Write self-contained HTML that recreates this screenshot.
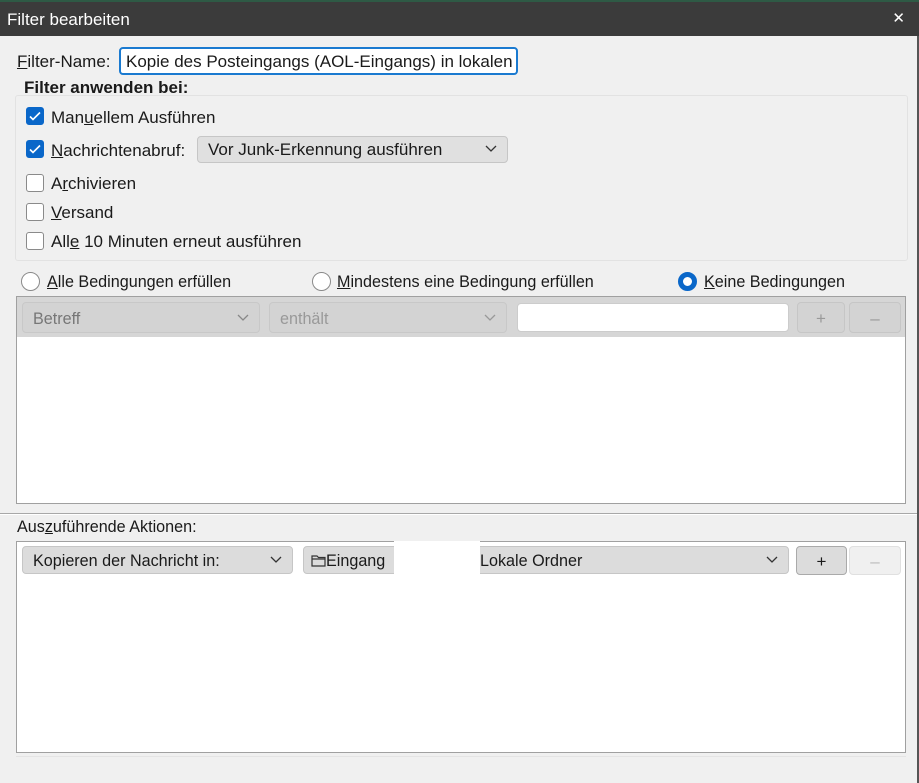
<!DOCTYPE html>
<html><head><meta charset="utf-8">
<style>
*{box-sizing:border-box;margin:0;padding:0}
body{width:919px;height:783px;background:#f0f0f0;font-family:"Liberation Sans",sans-serif;font-size:17px;color:#1a1a1a;position:relative;overflow:hidden}
.a{position:absolute}
.title{left:0;top:0;width:919px;height:36px;background:#3b3b3b;border-top:2px solid #2e5a45;color:#fff;font-size:17px;padding:8px 0 0 7px}
.cb{width:18px;height:18px;border:1px solid #8a8a8a;border-radius:3px;background:#fff}
.cb.on{background:#0a67c9;border-color:#0a67c9}
.lbl{white-space:nowrap}
.dd{background:#e0e0e0;border:1px solid #c6c6c6;border-radius:4px;padding:4px 10px;white-space:nowrap}
.chev{position:absolute;right:10px;top:8px}
.cond{transform-origin:left center}
.rad{width:19px;height:19px;border-radius:50%;border:1px solid #8a8a8a;background:#fff}
</style></head><body>
<div class="a title">Filter bearbeiten<span class="a" style="right:14px;top:7px;font-size:15px">✕</span></div>
<div class="a" style="right:0;top:36px;width:2px;height:747px;background:#555"></div>

<div class="a lbl" style="left:17px;top:52px"><u>F</u>ilter-Name:</div>
<div class="a" style="left:119px;top:47px;width:399px;height:28px;border:2px solid #1a7ad0;border-radius:4px;background:#fff;padding:3px 0 0 5px;white-space:nowrap;overflow:hidden">Kopie des Posteingangs (AOL-Eingangs) in lokalen O</div>
<div class="a lbl" style="left:24px;top:78px;font-weight:bold">Filter anwenden bei:</div>
<div class="a" style="left:15px;top:95px;width:893px;height:166px;border:1px solid #e2e2e2;border-radius:3px"></div>

<div class="a cb on" style="left:26px;top:107px"><svg width="16" height="16" viewBox="0 0 16 16"><path d="M3 8.5l3 3 7-7" stroke="#fff" stroke-width="1.6" fill="none"/></svg></div>
<div class="a lbl" style="left:51px;top:108px">Man<u>u</u>ellem Ausführen</div>
<div class="a cb on" style="left:26px;top:140px"><svg width="16" height="16" viewBox="0 0 16 16"><path d="M3 8.5l3 3 7-7" stroke="#fff" stroke-width="1.6" fill="none"/></svg></div>
<div class="a lbl" style="left:51px;top:141px"><u>N</u>achrichtenabruf:</div>
<div class="a dd" style="left:197px;top:136px;width:311px;height:27px;padding-top:3px">Vor Junk-Erkennung ausführen<svg class="chev" width="12" height="8" viewBox="0 0 12 8"><path d="M1 1l5 5 5-5" stroke="#333" stroke-width="1.3" fill="none"/></svg></div>
<div class="a cb" style="left:26px;top:174px"></div>
<div class="a lbl" style="left:51px;top:174px">A<u>r</u>chivieren</div>
<div class="a cb" style="left:26px;top:203px"></div>
<div class="a lbl" style="left:51px;top:203px"><u>V</u>ersand</div>
<div class="a cb" style="left:26px;top:232px"></div>
<div class="a lbl" style="left:51px;top:232px">All<u>e</u> 10 Minuten erneut ausführen</div>

<div class="a rad" style="left:21px;top:272px"></div>
<div class="a lbl cond" style="left:47px;top:272px;transform:scaleX(.95)"><u>A</u>lle Bedingungen erfüllen</div>
<div class="a rad" style="left:312px;top:272px"></div>
<div class="a lbl cond" style="left:337px;top:272px;transform:scaleX(.95)"><u>M</u>indestens eine Bedingung erfüllen</div>
<div class="a rad" style="left:678px;top:272px;border:5px solid #0a67c9"></div>
<div class="a lbl cond" style="left:704px;top:272px;transform:scaleX(.95)"><u>K</u>eine Bedingungen</div>

<div class="a" style="left:16px;top:296px;width:890px;height:208px;border:1px solid #a0a0a0;background:#fff"></div>
<div class="a" style="left:17px;top:297px;width:888px;height:40px;background:#d6d6d6"></div>
<div class="a dd" style="left:22px;top:302px;width:238px;height:31px;color:#777;background:#d3d3d3;border-color:#c8c8c8;padding-top:6px"><span class="cond" style="display:inline-block;transform:scaleX(.95)">Betreff</span><svg class="chev" style="top:11px" width="12" height="8" viewBox="0 0 12 8"><path d="M1 1l5 5 5-5" stroke="#888" stroke-width="1.3" fill="none"/></svg></div>
<div class="a dd" style="left:269px;top:302px;width:238px;height:31px;color:#999;background:#d3d3d3;border-color:#c8c8c8;padding-top:6px"><span class="cond" style="display:inline-block;transform:scaleX(.95)">enthält</span><svg class="chev" style="top:11px" width="12" height="8" viewBox="0 0 12 8"><path d="M1 1l5 5 5-5" stroke="#999" stroke-width="1.3" fill="none"/></svg></div>
<div class="a" style="left:517px;top:303px;width:272px;height:29px;background:#fff;border:1px solid #ccc;border-radius:4px"></div>
<div class="a dd" style="left:797px;top:302px;width:48px;height:31px;background:#d3d3d3;color:#999;text-align:center;padding:6px 0 0">+</div>
<div class="a dd" style="left:849px;top:302px;width:52px;height:31px;background:#d3d3d3;color:#999;text-align:center;padding:6px 0 0">–</div>

<div class="a" style="left:0;top:513px;width:917px;height:2px;border-top:1px solid #a8a8a8;border-bottom:1px solid #fff"></div>
<div class="a lbl cond" style="left:17px;top:517px;transform:scaleX(.95)">Aus<u>z</u>uführende Aktionen:</div>

<div class="a" style="left:16px;top:541px;width:890px;height:212px;border:1px solid #a0a0a0;background:#fff"></div>
<div class="a dd" style="left:22px;top:546px;width:271px;height:28px;background:#dcdcdc;padding-top:4px"><span class="cond" style="display:inline-block;transform:scaleX(.95)">Kopieren der Nachricht in:</span><svg class="chev" style="top:9px" width="12" height="8" viewBox="0 0 12 8"><path d="M1 1l5 5 5-5" stroke="#333" stroke-width="1.3" fill="none"/></svg></div>
<div class="a dd" style="left:303px;top:546px;width:486px;height:28px;background:#dcdcdc;padding:4px 0 0 7px"><svg width="15" height="13" viewBox="0 0 15 13" style="vertical-align:-1px"><path d="M1 2h5l1.5 1.5H14v8.5H1z M1 5h13" stroke="#333" stroke-width="1.2" fill="none"/></svg><span class="cond" style="display:inline-block;transform:scaleX(.95)">Eingang</span><span class="a cond" style="left:176px;top:4px;transform:scaleX(.95)">Lokale Ordner</span><svg class="chev" style="top:9px" width="12" height="8" viewBox="0 0 12 8"><path d="M1 1l5 5 5-5" stroke="#333" stroke-width="1.3" fill="none"/></svg></div>
<div class="a" style="left:394px;top:541px;width:86px;height:38px;background:#fff"></div>
<div class="a dd" style="left:796px;top:546px;width:51px;height:29px;background:#dcdcdc;border-color:#aaa;text-align:center;padding:5px 0 0">+</div>
<div class="a dd" style="left:849px;top:546px;width:52px;height:29px;background:#f0f0f0;border-color:#e0e0e0;color:#bbb;text-align:center;padding:5px 0 0">–</div>
<div class="a" style="left:16px;top:756px;width:890px;height:1px;background:#e4e4e4"></div>
</body></html>
